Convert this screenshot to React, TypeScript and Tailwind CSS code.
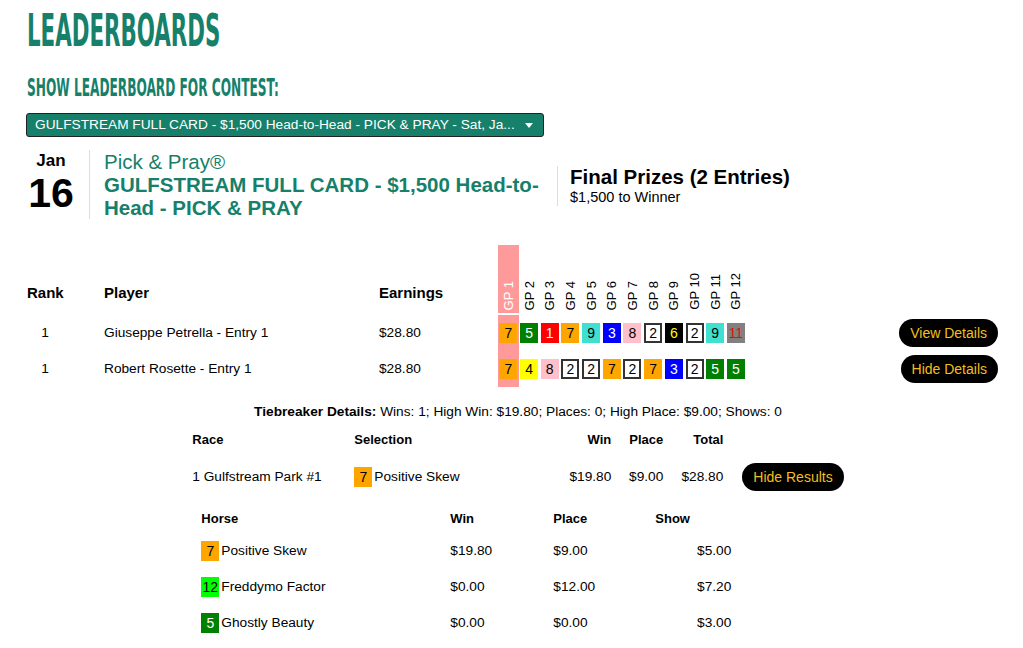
import React from 'react';

// saddle cloth colours by program number
const SADDLE: Record<number, string> = {
  1: 'bg-[#ff0000] text-white',
  2: 'bg-white text-black border-2 border-[#333]',
  3: 'bg-[#0000ff] text-white',
  4: 'bg-[#ffff00] text-black',
  5: 'bg-[#008000] text-white',
  6: 'bg-black text-[#ffff00]',
  7: 'bg-[#ffa500] text-black',
  8: 'bg-[#ffc0cb] text-black',
  9: 'bg-[#40e0d0] text-black',
  11: 'bg-[#808080] text-[#ff0000]',
  12: 'bg-[#00ff00] text-black',
};

const ROW_GRID = 'grid grid-cols-[77px_275px_119px_repeat(12,20.7px)_1fr]';

const entries = [
  { rank: 1, name: 'Giuseppe Petrella - Entry 1', earnings: '$28.80', picks: [7, 5, 1, 7, 9, 3, 8, 2, 6, 2, 9, 11], action: 'View Details' },
  { rank: 1, name: 'Robert Rosette - Entry 1', earnings: '$28.80', picks: [7, 4, 8, 2, 2, 7, 2, 7, 3, 2, 5, 5], action: 'Hide Details' },
];

const horses = [
  { n: 7, name: 'Positive Skew', win: '$19.80', place: '$9.00', show: '$5.00' },
  { n: 12, name: 'Freddymo Factor', win: '$0.00', place: '$12.00', show: '$7.20' },
  { n: 5, name: 'Ghostly Beauty', win: '$0.00', place: '$0.00', show: '$3.00' },
];

function Saddle({ n }: { n: number }) {
  return (
    <span className={`inline-flex h-[20px] w-[18px] shrink-0 items-center justify-center text-[14px] leading-none ${SADDLE[n]}`}>
      {n}
    </span>
  );
}

function PillButton({ children }: { children: React.ReactNode }) {
  return (
    <button className="h-[28px] rounded-full bg-black px-[11px] text-[14px] leading-none text-[#f2bf1c]">
      {children}
    </button>
  );
}

export default function App() {
  return (
    <div className="min-h-screen bg-white pl-[27px] pr-[14px] pt-[9px] font-['Liberation_Sans',Arial,sans-serif] text-black">
      {/* headings */}
      <div className="h-[63px]">
        <h1 className="inline-block origin-top-left scale-x-[0.86] scale-y-[1.6] font-['DejaVu_Sans_Condensed',sans-serif] text-[27.6px] font-bold leading-none text-[#16806a]">
          LEADERBOARDS
        </h1>
      </div>
      <div className="h-[41px]">
        <h2 className="inline-block origin-top-left scale-x-[0.835] scale-y-[1.52] font-['DejaVu_Sans_Condensed',sans-serif] text-[16.2px] font-bold leading-none text-[#16806a]">
          SHOW LEADERBOARD FOR CONTEST:
        </h2>
      </div>

      {/* contest picker */}
      <div className="-ml-px flex h-[24px] w-[518px] items-center justify-between rounded-[3px] border border-[#222] bg-[#17806a] pl-[8px] pr-[10px] text-[13.7px] text-white">
        <span>GULFSTREAM FULL CARD - $1,500 Head-to-Head - PICK &amp; PRAY - Sat, Ja...</span>
        <svg width="8" height="5" viewBox="0 0 8 5">
          <polygon points="0,0 8,0 4,5" fill="white" />
        </svg>
      </div>

      {/* contest header */}
      <div className="mt-[13px] flex">
        <div className="w-[48px] pt-[1px] text-center">
          <div className="text-[17px] font-bold leading-[20px]">Jan</div>
          <div className="mt-[2px] text-[41px] font-bold leading-none">16</div>
        </div>
        <div className="ml-[14px] w-px bg-[#ddd]" />
        <div className="w-[467px] pl-[14px] pr-[12px] text-[20.5px] leading-[23px] text-[#16806a]">
          <div>Pick &amp; Pray®</div>
          <div className="font-bold">GULFSTREAM FULL CARD - $1,500 Head-to-Head - PICK &amp; PRAY</div>
        </div>
        <div className="mt-[3px] self-center border-l border-[#ddd] pl-[12px]">
          <div className="text-[20.5px] font-bold leading-[22px]">Final Prizes (2 Entries)</div>
          <div className="text-[14.5px] leading-[18px]">$1,500 to Winner</div>
        </div>
      </div>

      {/* standings */}
      <div className={`${ROW_GRID} mt-[26px] mb-[2px] h-[68px] items-end`}>
        <div className="w-[36px] pb-[9px] text-center text-[15px] font-bold">Rank</div>
        <div className="pb-[9px] text-[15px] font-bold">Player</div>
        <div className="pb-[9px] text-[15px] font-bold">Earnings</div>
        {entries[0].picks.map((_, i) => (
          <div key={i} className={`flex h-full items-end justify-center pb-[3px] ${i === 0 ? 'bg-[#ff9a9a] text-white' : ''}`}>
            <span className="rotate-180 text-[13px] leading-none [writing-mode:vertical-rl]">GP {i + 1}</span>
          </div>
        ))}
        <div />
      </div>
      {entries.map((e) => (
        <div key={e.name} className={`${ROW_GRID} h-[36px] items-center text-[13.7px]`}>
          <div className="w-[36px] text-center">{e.rank}</div>
          <div>{e.name}</div>
          <div>{e.earnings}</div>
          {e.picks.map((n, i) => (
            <div key={i} className={`flex h-full items-center justify-center ${i === 0 ? 'bg-[#ff9a9a]' : ''}`}>
              <Saddle n={n} />
            </div>
          ))}
          <div className="flex justify-end pr-[11px]">
            <PillButton>{e.action}</PillButton>
          </div>
        </div>
      ))}

      {/* expanded details */}
      <div className="mt-[15px] text-center text-[13.7px] leading-[20px]">
        <b>Tiebreaker Details:</b> Wins: 1; High Win: $19.80; Places: 0; High Place: $9.00; Shows: 0
      </div>
      <div className="mx-auto w-fit">
        <div className="mt-[9px] grid grid-cols-[162px_200px_57px_52px_60px_auto] text-[13px] font-bold leading-[18px]">
          <div>Race</div>
          <div>Selection</div>
          <div className="text-right">Win</div>
          <div className="text-right">Place</div>
          <div className="text-right">Total</div>
          <div />
        </div>
        <div className="mt-[14px] grid h-[28px] grid-cols-[162px_200px_57px_52px_60px_auto] items-center text-[13.7px]">
          <div>1 Gulfstream Park #1</div>
          <div className="flex items-center gap-[2px]">
            <Saddle n={7} />
            <span>Positive Skew</span>
          </div>
          <div className="text-right">$19.80</div>
          <div className="text-right">$9.00</div>
          <div className="text-right">$28.80</div>
          <div className="pl-[19px]">
            <PillButton>Hide Results</PillButton>
          </div>
        </div>

        <div className="ml-[9px] mt-[19px]">
          <div className="grid grid-cols-[249px_103px_102px_76px] text-[13px] font-bold leading-[18px]">
            <div>Horse</div>
            <div>Win</div>
            <div>Place</div>
            <div>Show</div>
          </div>
          <div className="mt-[5px]">
            {horses.map((h) => (
              <div key={h.name} className="grid h-[36px] grid-cols-[249px_103px_102px_76px] items-center text-[13.7px]">
                <div className="flex items-center gap-[2px]">
                  <Saddle n={h.n} />
                  <span>{h.name}</span>
                </div>
                <div>{h.win}</div>
                <div>{h.place}</div>
                <div className="text-right">{h.show}</div>
              </div>
            ))}
          </div>
        </div>
      </div>
    </div>
  );
}
